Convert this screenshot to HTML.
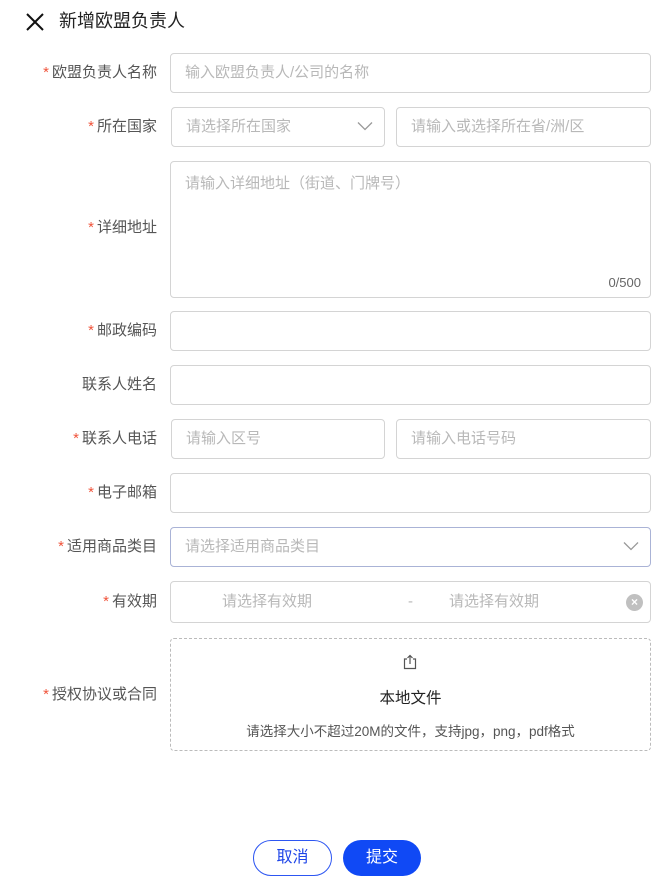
<!DOCTYPE html><html><head><meta charset="utf-8"><style>
body{margin:0;width:666px;height:885px;background:#fff;font-family:"Liberation Sans","Noto Sans CJK SC",sans-serif;position:relative;overflow:hidden}
.a{position:absolute;box-sizing:border-box}
.lb{position:absolute;right:509px;font-size:15px;color:#555;white-space:nowrap;line-height:20px}
.lb i{color:#f0533a;font-style:normal;margin-right:3px}
.in{position:absolute;box-sizing:border-box;border:1px solid #d4d4d4;border-radius:4px;font-size:15px;color:#b8b8b8;padding-left:14px;line-height:38px;white-space:nowrap}
.ch{position:absolute;right:11px;top:13px}
</style></head><body>
<svg class="a" style="left:24px;top:11px" width="22" height="22" viewBox="0 0 22 22"><path d="M3 3L19 19M19 3L3 19" stroke="#111" stroke-width="2"/></svg>
<div class="a" style="left:59px;top:9px;font-size:18px;color:#222;line-height:24px">新增欧盟负责人</div>

<div class="lb" style="top:63px"><i>*</i>欧盟负责人名称</div>
<div class="in" style="left:170px;top:53px;width:481px;height:40px">输入欧盟负责人/公司的名称</div>

<div class="lb" style="top:117px"><i>*</i>所在国家</div>
<div class="in" style="left:171px;top:107px;width:214px;height:40px">请选择所在国家<svg class="ch" width="16" height="10" viewBox="0 0 16 10"><path d="M1 1.5L8 8.5 15 1.5" fill="none" stroke="#999" stroke-width="1.3"/></svg></div>
<div class="in" style="left:396px;top:107px;width:255px;height:40px">请输入或选择所在省/洲/区</div>

<div class="lb" style="top:218px"><i>*</i>详细地址</div>
<div class="in" style="left:170px;top:161px;width:481px;height:137px;line-height:20px;padding-top:12px">请输入详细地址（街道、门牌号）<span style="position:absolute;right:9px;bottom:4px;font-size:13px;color:#666">0/500</span></div>

<div class="lb" style="top:321px"><i>*</i>邮政编码</div>
<div class="in" style="left:170px;top:311px;width:481px;height:40px"></div>

<div class="lb" style="top:375px">联系人姓名</div>
<div class="in" style="left:170px;top:365px;width:481px;height:40px"></div>

<div class="lb" style="top:429px"><i>*</i>联系人电话</div>
<div class="in" style="left:171px;top:419px;width:214px;height:40px">请输入区号</div>
<div class="in" style="left:396px;top:419px;width:255px;height:40px">请输入电话号码</div>

<div class="lb" style="top:483px"><i>*</i>电子邮箱</div>
<div class="in" style="left:170px;top:473px;width:481px;height:40px"></div>

<div class="lb" style="top:537px"><i>*</i>适用商品类目</div>
<div class="in" style="left:170px;top:527px;width:481px;height:40px;border-color:#aab3d6">请选择适用商品类目<svg class="ch" width="16" height="10" viewBox="0 0 16 10"><path d="M1 1.5L8 8.5 15 1.5" fill="none" stroke="#999" stroke-width="1.3"/></svg></div>

<div class="lb" style="top:592px"><i>*</i>有效期</div>
<div class="in" style="left:170px;top:581px;width:481px;height:42px;line-height:40px;padding-left:0">
<span class="a" style="left:51px">请选择有效期</span><span class="a" style="left:237px">-</span><span class="a" style="left:278px">请选择有效期</span>
<span class="a" style="left:455px;top:12px;width:17px;height:17px;border-radius:50%;background:#c0c0c0;color:#fff;font-size:12px;line-height:17px;text-align:center;font-weight:bold">×</span></div>

<div class="lb" style="top:685px"><i>*</i>授权协议或合同</div>
<div class="a" style="left:170px;top:638px;width:481px;height:113px;border:1px dashed #bbb;border-radius:4px;text-align:center">
<svg class="a" style="left:231px;top:15px" width="16" height="16" viewBox="0 0 16 16" fill="none" stroke="#555" stroke-width="1.2"><path d="M5 5H2.5V14.5H13.5V5H11M8 10V1.5M5.5 4L8 1.5 10.5 4"/></svg>
<div class="a" style="left:0;right:0;top:47px;font-size:15.5px;color:#222">本地文件</div>
<div class="a" style="left:0;right:0;top:81px;font-size:13.5px;color:#555">请选择大小不超过20M的文件，支持jpg，png，pdf格式</div></div>

<div class="a" style="left:253px;top:840px;width:79px;height:36px;border:1px solid #2d56f2;border-radius:18px;color:#1e45e8;font-size:16px;text-align:center;line-height:34px">取消</div>
<div class="a" style="left:343px;top:840px;width:78px;height:36px;background:#1049f5;border-radius:18px;color:#fff;font-size:16px;text-align:center;line-height:36px">提交</div>
</body></html>
